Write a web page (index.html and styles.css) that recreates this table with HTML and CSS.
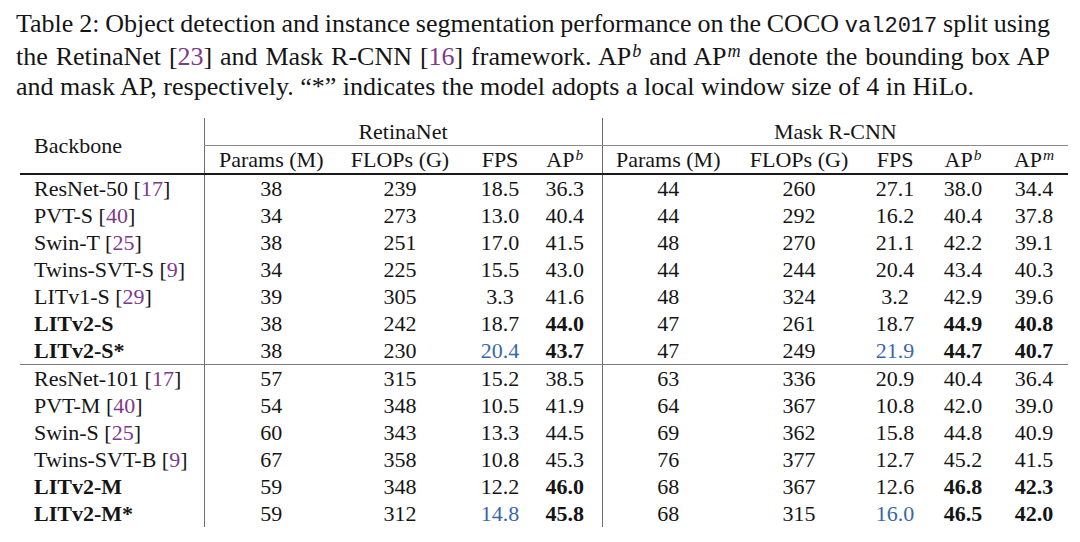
FILE: index.html
```html
<!DOCTYPE html>
<html lang="en">
<head>
<meta charset="utf-8">
<title>Table 2</title>
<link rel="stylesheet" href="styles.css">
</head>
<body>
<div class="page">
  <div class="caption">
    <div class="cap-line just tight">Table 2: Object detection and instance segmentation performance on the COCO <span class="tt">val2017</span> split using</div>
    <div class="cap-line just">the RetinaNet [<span class="cite">23</span>] and Mask R-CNN [<span class="cite">16</span>] framework. AP<sup class="m">b</sup> and AP<sup class="m">m</sup> denote the bounding box AP</div>
    <div class="cap-line">and mask AP, respectively. “*” indicates the model adopts a local window size of 4 in HiLo.</div>
  </div>

  <table class="results">
    <colgroup>
      <col class="c-bb">
      <col class="c-p1"><col class="c-f1"><col class="c-s1"><col class="c-a1">
      <col class="c-p2"><col class="c-f2"><col class="c-s2"><col class="c-a2"><col class="c-m2">
    </colgroup>
    <thead>
      <tr class="h1">
        <th rowspan="2" class="bb">Backbone</th>
        <th colspan="4" class="group vl">RetinaNet</th>
        <th colspan="5" class="group vl">Mask R-CNN</th>
      </tr>
      <tr class="h2">
        <th class="vl">Params (M)</th><th>FLOPs (G)</th><th>FPS</th><th class="ap1">AP<sup class="m">b</sup></th>
        <th class="vl">Params (M)</th><th>FLOPs (G)</th><th>FPS</th><th>AP<sup class="m">b</sup></th><th>AP<sup class="m">m</sup></th>
      </tr>
    </thead>
    <tbody>
      <tr><td class="bb">ResNet-50 [<span class="cite">17</span>]</td><td class="vl">38</td><td>239</td><td>18.5</td><td class="ap1">36.3</td><td class="vl">44</td><td>260</td><td>27.1</td><td>38.0</td><td>34.4</td></tr>
      <tr><td class="bb">PVT-S [<span class="cite">40</span>]</td><td class="vl">34</td><td>273</td><td>13.0</td><td class="ap1">40.4</td><td class="vl">44</td><td>292</td><td>16.2</td><td>40.4</td><td>37.8</td></tr>
      <tr><td class="bb">Swin-T [<span class="cite">25</span>]</td><td class="vl">38</td><td>251</td><td>17.0</td><td class="ap1">41.5</td><td class="vl">48</td><td>270</td><td>21.1</td><td>42.2</td><td>39.1</td></tr>
      <tr><td class="bb">Twins-SVT-S [<span class="cite">9</span>]</td><td class="vl">34</td><td>225</td><td>15.5</td><td class="ap1">43.0</td><td class="vl">44</td><td>244</td><td>20.4</td><td>43.4</td><td>40.3</td></tr>
      <tr><td class="bb">LITv1-S [<span class="cite">29</span>]</td><td class="vl">39</td><td>305</td><td>3.3</td><td class="ap1">41.6</td><td class="vl">48</td><td>324</td><td>3.2</td><td>42.9</td><td>39.6</td></tr>
      <tr><td class="bb b">LITv2-S</td><td class="vl">38</td><td>242</td><td>18.7</td><td class="ap1 b">44.0</td><td class="vl">47</td><td>261</td><td>18.7</td><td class="b">44.9</td><td class="b">40.8</td></tr>
      <tr><td class="bb b">LITv2-S*</td><td class="vl">38</td><td>230</td><td class="blue">20.4</td><td class="ap1 b">43.7</td><td class="vl">47</td><td>249</td><td class="blue">21.9</td><td class="b">44.7</td><td class="b">40.7</td></tr>
      <tr class="sep"><td class="bb">ResNet-101 [<span class="cite">17</span>]</td><td class="vl">57</td><td>315</td><td>15.2</td><td class="ap1">38.5</td><td class="vl">63</td><td>336</td><td>20.9</td><td>40.4</td><td>36.4</td></tr>
      <tr><td class="bb">PVT-M [<span class="cite">40</span>]</td><td class="vl">54</td><td>348</td><td>10.5</td><td class="ap1">41.9</td><td class="vl">64</td><td>367</td><td>10.8</td><td>42.0</td><td>39.0</td></tr>
      <tr><td class="bb">Swin-S [<span class="cite">25</span>]</td><td class="vl">60</td><td>343</td><td>13.3</td><td class="ap1">44.5</td><td class="vl">69</td><td>362</td><td>15.8</td><td>44.8</td><td>40.9</td></tr>
      <tr><td class="bb">Twins-SVT-B [<span class="cite">9</span>]</td><td class="vl">67</td><td>358</td><td>10.8</td><td class="ap1">45.3</td><td class="vl">76</td><td>377</td><td>12.7</td><td>45.2</td><td>41.5</td></tr>
      <tr><td class="bb b">LITv2-M</td><td class="vl">59</td><td>348</td><td>12.2</td><td class="ap1 b">46.0</td><td class="vl">68</td><td>367</td><td>12.6</td><td class="b">46.8</td><td class="b">42.3</td></tr>
      <tr><td class="bb b">LITv2-M*</td><td class="vl">59</td><td>312</td><td class="blue">14.8</td><td class="ap1 b">45.8</td><td class="vl">68</td><td>315</td><td class="blue">16.0</td><td class="b">46.5</td><td class="b">42.0</td></tr>
    </tbody>
  </table>
</div>
</body>
</html>
```

FILE: styles.css
```css
html, body {
  margin: 0;
  padding: 0;
  background: #ffffff;
}

body {
  font-family: "Liberation Serif", "Times New Roman", serif;
  color: #151515;
}

.page {
  width: 1080px;
  height: 542px;
  overflow: hidden;
}

.caption {
  padding: 9px 0 0 16px;
  width: 1034px;
  font-size: 26px;
  line-height: 30px;
}

.cap-line {
  white-space: nowrap;
}

.cap-line.just {
  text-align: justify;
  text-align-last: justify;
  white-space: normal;
}

.cap-line.tight {
  word-spacing: -4px;
}

.tt {
  font-family: "Liberation Mono", "Courier New", monospace;
  font-size: 22px;
}

.cite {
  color: #7d3a8a;
}

sup.m {
  font-style: italic;
  font-size: 0.7em;
  line-height: 0;
  vertical-align: 0.45em;
  padding-left: 1px;
}

.results {
  margin: 16px 0 0 20px;
  width: 1048px;
  table-layout: fixed;
  border-collapse: collapse;
  font-size: 22px;
}

.c-bb { width: 184px; }
.c-p1 { width: 134px; }
.c-f1 { width: 124px; }
.c-s1 { width: 76px; }
.c-a1 { width: 64px; }
.c-p2 { width: 132px; }
.c-f2 { width: 130px; }
.c-s2 { width: 62px; }
.c-a2 { width: 74px; }
.c-m2 { width: 68px; }

.results th,
.results td {
  padding: 0;
  height: 27px;
  line-height: 27px;
  text-align: center;
  font-weight: normal;
  white-space: nowrap;
}

.results .bb {
  text-align: left;
  padding-left: 14px;
}

.results th.bb {
  vertical-align: middle;
  border-bottom: 2px solid #1a1a1a;
}

.results .vl {
  border-left: 1px solid #6e6e6e;
}

.results .ap1 {
  padding-right: 10px;
}

.results tr.h1 th.group {
  border-bottom: 1px solid #8a8a8a;
}

.results tr.h2 th {
  border-bottom: 2px solid #1a1a1a;
}

.results tr.sep td {
  border-top: 1px solid #7a7a7a;
}

.results .b {
  font-weight: bold;
}

.results .blue {
  color: #3a67a8;
}
```
